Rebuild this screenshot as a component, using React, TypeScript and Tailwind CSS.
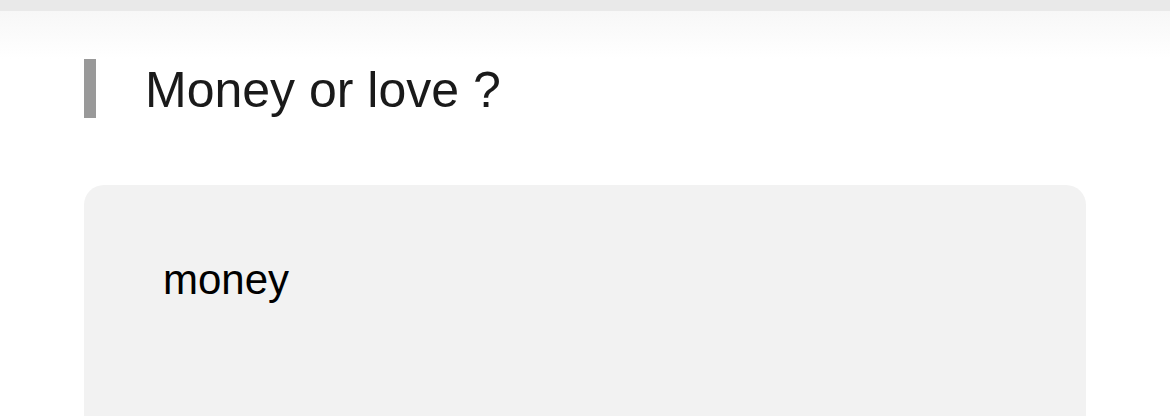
export default function App() {
  return (
    <div className="w-[1170px] h-[416px] overflow-hidden bg-white" style={{ fontFamily: '"Liberation Sans", Arial, sans-serif' }}>
      <div className="h-[11px] bg-[#e9e9e9]" />
      <div className="h-[48px] bg-gradient-to-b from-[#f7f7f7] to-white" />
      <div className="px-[84px]">
        <div className="flex items-start">
          <div className="w-[12px] h-[59px] bg-[#999999]" />
          <div className="ml-[49px] mt-[2px] text-[50px] leading-[59px] text-[#1a1a1a]">Money or love ?</div>
        </div>
        <div className="mt-[65px] h-[300px] rounded-[20px] bg-[#f2f2f2] pl-[79px] pt-[71px]">
          <div className="text-[42px] leading-[48px] text-black">money</div>
        </div>
      </div>
    </div>
  );
}
